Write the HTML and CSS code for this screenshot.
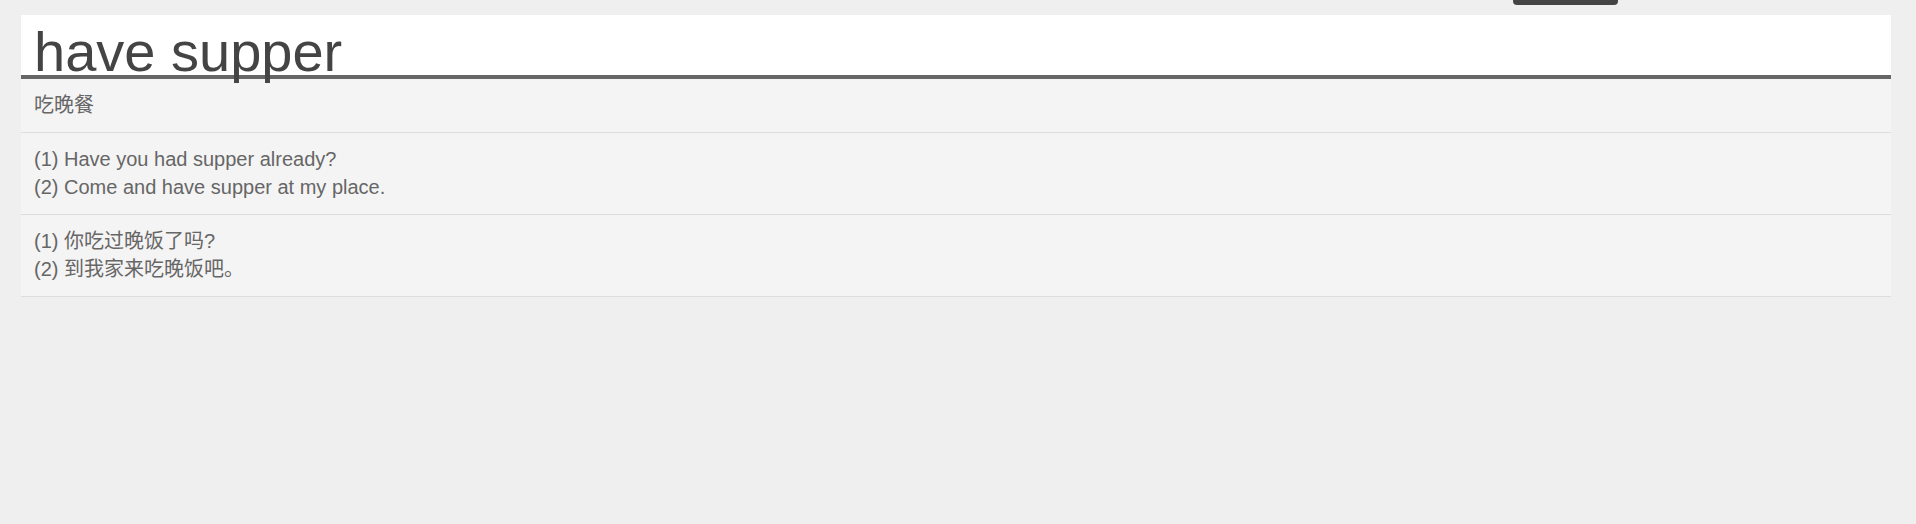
FILE: index.html
```html
<!DOCTYPE html>
<html>
<head>
  <meta charset="utf-8">
  <link rel="stylesheet" href="styles.css">
</head>
<body>
<a class="top-tab" href="#"></a>
<div class="card">
  <header class="word-head">
    <h1>have supper</h1>
  </header>
  <div class="row">吃晚餐</div>
  <div class="row">
    (1) Have you had supper already?<br>
    (2) Come and have supper at my place.
  </div>
  <div class="row">
    (1) 你吃过晚饭了吗?<br>
    (2) 到我家来吃晚饭吧。
  </div>
</div>
</body>
</html>
```
FILE: styles.css
```css
body {
  margin: 0;
  padding: 15px 25px 0 21px;
  background: #efefef;
  font-family: "Liberation Sans", Arial, "Noto Sans CJK SC", sans-serif;
  color: #666;
}
/* small tab stuck at the top */
.top-tab {
  position: absolute;
  top: -6px;
  left: 1513px;
  width: 105px;
  height: 11px;
  background: #444;
  border-radius: 4px;
}
.word-head {
  height: 60px;
  background: #fff;
  border-bottom: 4px solid #666;
}
.word-head h1 {
  margin: 0;
  padding: 9px 0 0 13px;
  font-size: 56px;
  font-weight: normal;
  line-height: 56px;
  height: 51px;
  color: #444;
}
.row {
  background: #f4f4f4;
  border-bottom: 1px solid #ddd;
  padding: 12px 13px;
  font-size: 20px;
  line-height: 28.5px;
}
```
